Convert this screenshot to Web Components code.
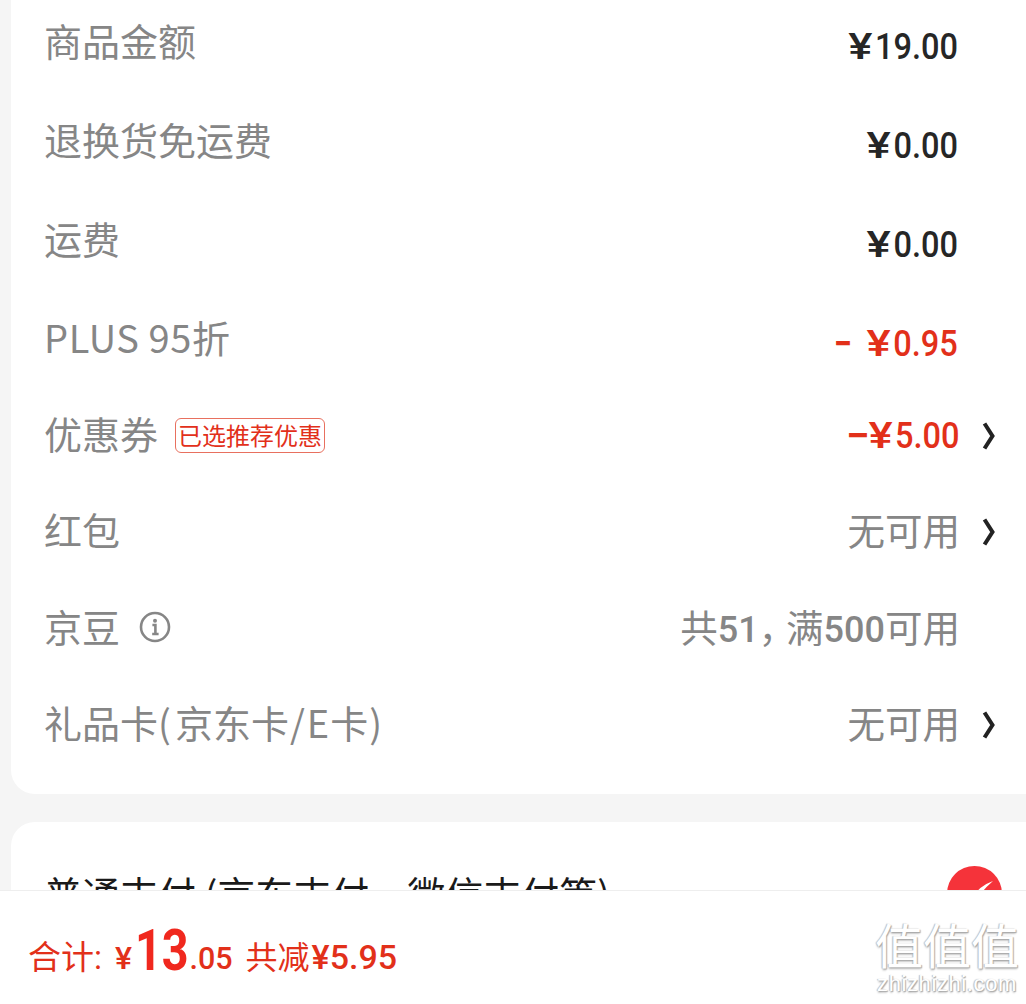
<!DOCTYPE html>
<html lang="zh"><head><meta charset="utf-8"><title>订单</title>
<style>
html,body{margin:0;padding:0;height:1004px;overflow:hidden;background:#f5f5f5}
body{font-family:"Noto Sans CJK SC","Noto Sans",sans-serif}
checkout-page{height:1004px}
.yen{display:inline-block;transform:scaleX(1.4);transform-origin:right;margin-right:3px}
.n{font:500 36px Roboto,sans-serif}
.cm{letter-spacing:-10px}
.mi{display:inline-block;margin-right:15px;font-weight:700}
.mj{display:inline-block;margin-right:6px;transform:scaleX(1.3);transform-origin:right;font-weight:700}
</style></head><body>
<checkout-page>
  <price-card>
    <price-row label-text="商品金额"><span slot="value"><span class="yen">¥</span>19.00</span></price-row>
    <price-row label-text="退换货免运费"><span slot="value"><span class="yen">¥</span>0.00</span></price-row>
    <price-row label-text="运费"><span slot="value"><span class="yen">¥</span>0.00</span></price-row>
    <price-row label-text="PLUS 95折" tone="red" short latin><span slot="value"><span class="mi">−</span>&nbsp;<span class="yen">¥</span>0.95</span></price-row>
    <price-row label-text="优惠券" tone="red" compact arrow><order-tag slot="label">已选推荐优惠</order-tag><span slot="value"><span class="mj">−</span><span class="yen">¥</span>5.00</span></price-row>
    <price-row label-text="红包" tone="muted" compact arrow><span slot="value">无可用</span></price-row>
    <price-row label-text="京豆" tone="muted" compact><info-icon slot="label"></info-icon><span slot="value">共<span class="n">51</span><span class="cm">，</span>满<span class="n">500</span>可用</span></price-row>
    <price-row label-text="礼品卡<span style='padding-right:4px'>(</span>京东卡<span style='padding:0 1px'>/</span><span style='padding:0 1px'>E</span>卡<span style='padding-left:1px'>)</span>" tone="muted" compact arrow><span slot="value">无可用</span></price-row>
  </price-card>
  <pay-card></pay-card>
  <total-bar></total-bar>
</checkout-page>
<script>
const cjk='"Noto Sans CJK SC",sans-serif';
customElements.define('checkout-page',class extends HTMLElement{constructor(){super();this.attachShadow({mode:'open'}).innerHTML=`<style>:host{display:flex;flex-direction:column;position:relative;overflow:hidden;width:1026px;padding-left:11px;box-sizing:border-box}</style><slot></slot>`}});
customElements.define('price-card',class extends HTMLElement{constructor(){super();this.attachShadow({mode:'open'}).innerHTML=`<style>:host{display:block;background:#fff;border-radius:0 0 0 24px;margin-top:-3px;padding:0 0 21px 33px}</style><slot></slot>`}});
customElements.define('price-row',class extends HTMLElement{
  constructor(){super();const s=this.attachShadow({mode:'open'});
  s.innerHTML=`<style>
  :host{display:flex;align-items:center;height:99px;color:#262626;--lab:#868686}
  :host([short]){margin-bottom:-5px}
  :host([compact]){height:96.33px}
  :host([tone=red]){color:#e2301a}
  :host([tone=muted]){color:#868686}
  :host([latin]) #t{letter-spacing:.6px}
  .l{display:flex;align-items:center;font-size:38px;color:var(--lab);position:relative;top:-7px;white-space:nowrap;font-family:${cjk};line-height:54px}
  :host([compact]) .l{top:-3px}
  .val{margin-left:auto;font:500 37px/54px Roboto,${cjk};white-space:nowrap;transform:scaleX(.88);transform-origin:right}
  :host([tone=muted]) .val{font:400 37.5px/54px ${cjk};position:relative;top:-3px;margin-right:-2px;transform:none}
  .r{width:68px;flex:none;display:flex;padding-left:24px;box-sizing:border-box}
  svg{width:14px;height:28px;display:block}
  </style><div class="l"><span id="t"></span><slot name="label"></slot></div><div class="val"><slot name="value"></slot></div><div class="r" id="r"></div>`;}
  connectedCallback(){const s=this.shadowRoot;s.getElementById('t').innerHTML=this.getAttribute('label-text');
    if(this.hasAttribute('arrow'))s.getElementById('r').innerHTML='<svg viewBox="0 0 14 28"><path d="M2.5 1.5 10.5 14 2.5 26.5" fill="none" stroke="#222" stroke-width="4"/></svg>';
    if(this.getAttribute('label-text')==='优惠券'){s.querySelector('.val').style.marginRight='-2px'}
  }});
customElements.define('order-tag',class extends HTMLElement{constructor(){super();this.attachShadow({mode:'open'}).innerHTML=`<style>:host{display:block;margin-left:17px;box-sizing:border-box;width:150px;height:35px;border:1px solid #e8705f;border-radius:6px;color:#e2301a;font-size:24px;line-height:32px;text-align:center;white-space:nowrap;overflow:hidden;font-family:${cjk};position:relative;top:2px}</style><slot></slot>`}});
customElements.define('info-icon',class extends HTMLElement{constructor(){super();this.attachShadow({mode:'open'}).innerHTML=`<style>:host{display:block;margin-left:19px;width:32px;height:32px;position:relative;top:1px}svg{display:block}</style><svg width="32" height="32" viewBox="0 0 32 32"><circle cx="16" cy="16" r="14" fill="none" stroke="#868686" stroke-width="2.6"/><circle cx="16" cy="9.8" r="2" fill="#868686"/><path d="M13.4 14H16.4V22.4M13.2 23H19.6" fill="none" stroke="#868686" stroke-width="2.6"/></svg>`}});
customElements.define('pay-card',class extends HTMLElement{constructor(){super();this.attachShadow({mode:'open'}).innerHTML=`<style>:host{display:flex;align-items:flex-start;justify-content:space-between;background:#fff;border-radius:24px 0 0 0;margin-top:28px;padding:44px 24px 0 33px;height:200px;box-sizing:border-box;font-size:38px;color:#1a1a1a;white-space:nowrap;font-family:${cjk};line-height:54px}
  svg{display:block}</style><span>普通支付 (京东支付、微信支付等)</span><svg width="55" height="55" viewBox="0 0 55 55" style="flex:none"><circle cx="27.5" cy="27.5" r="27.5" fill="#f5333a"/><path d="M46 15Q32 20 25 32L18 26 15 29 25 41Q33 26 46 15Z" fill="#fff"/></svg>`}});
customElements.define('total-bar',class extends HTMLElement{constructor(){super();this.attachShadow({mode:'open'}).innerHTML=`<style>:host{position:absolute;left:0;right:0;top:890px;height:114px;background:#fff;border-top:1px solid #eee;box-sizing:border-box;display:flex;align-items:center;padding-left:28px;color:#e2301a;font-family:Roboto,${cjk};white-space:nowrap}
  .t{display:flex;align-items:baseline;position:relative;top:2px}
  .a{font-size:33px}.y{font-size:32px;margin-left:13px;font-weight:500}
  .b{display:inline-block;font-size:57px;font-weight:700;line-height:1;margin-left:3px;margin-right:-11px;color:#f0281e;transform:scaleX(.82);transform-origin:left;position:relative;top:1px}
  .c{font-size:30.5px;font-weight:500}.d{font-size:32px;margin-left:13px}.e{font-size:34px;font-weight:500;margin-left:2px}
  .w{position:absolute;left:874px;top:28px;width:146px;text-align:center;color:#fff;text-shadow:1px 1px 1px #aaa,-1px 0 1px #bbb,0 2px 2px #ccc;font-family:${cjk}}
  .w b{display:block;font-weight:400;font-size:48px;height:48px;line-height:48px}
  .w i{display:block;margin-top:6px;font:400 22px/22px "Liberation Sans",sans-serif;letter-spacing:.6px}
  </style><div class="t"><span class="a">合计:</span><span class="y">¥</span><span class="b">13</span><span class="c">.05</span><span class="d">共减</span><span class="e">¥5.95</span></div><div class="w"><b>值值值</b><i>zhizhizhi.com</i></div>`}});
</script>
</body></html>
